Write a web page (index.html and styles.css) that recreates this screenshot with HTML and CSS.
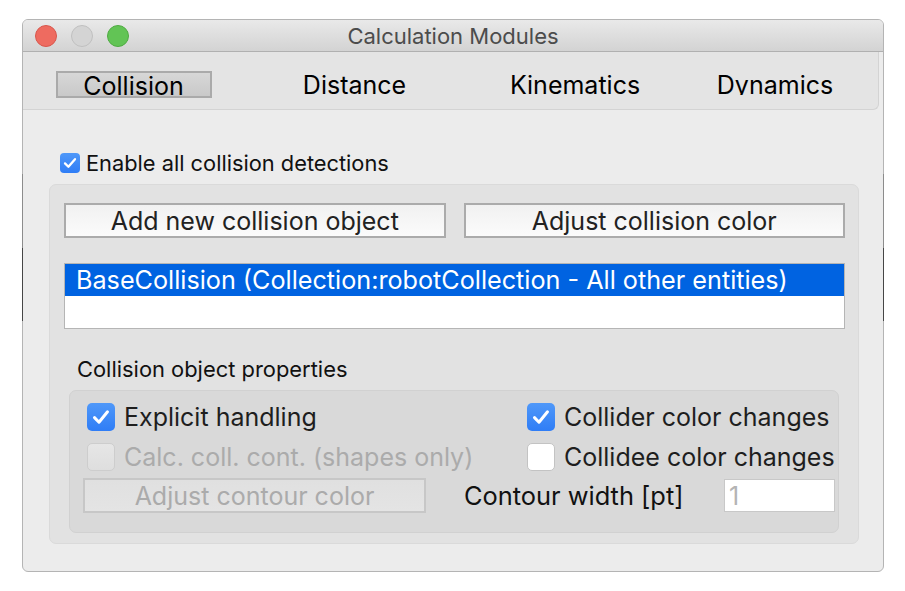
FILE: index.html
```html
<!DOCTYPE html>
<html>
<head>
<meta charset="utf-8">
<link rel="stylesheet" href="styles.css">
</head>
<body>
<div class="window">
  <div class="titlebar">
    <div class="lights">
      <span class="light red"></span>
      <span class="light grey"></span>
      <span class="light green"></span>
    </div>
    <div class="title">Calculation Modules</div>
    <div></div>
  </div>
  <div class="tabbar">
    <div class="tab"><div class="tab-box selected"><span class="tab-label">Collision</span></div></div>
    <div class="tab"><div class="tab-box"><span class="tab-label">Distance</span></div></div>
    <div class="tab"><div class="tab-box"><span class="tab-label">Kinematics</span></div></div>
    <div class="tab"><div class="tab-box"><span class="tab-label">Dynamics</span></div></div>
  </div>
  <div class="content">
    <div class="check-row">
      <span class="cb small checked"><svg viewBox="0 0 20 20" width="20" height="20"><path d="M5 10.4 L8.4 13.8 L15 6.2" fill="none" stroke="#fff" stroke-width="2.3" stroke-linecap="round" stroke-linejoin="round"/></svg></span>
      <span class="label-small">Enable all collision detections</span>
    </div>
    <div class="group outer">
      <div class="btn-row">
        <div class="btn">Add new collision object</div>
        <div class="btn">Adjust collision color</div>
      </div>
      <div class="list">
        <div class="list-item selected">BaseCollision (Collection:robotCollection - All other entities)</div>
      </div>
      <div class="group-label">Collision object properties</div>
      <div class="group inner">
        <div class="prop-row">
          <div class="prop left">
            <span class="cb big checked"><svg viewBox="0 0 28 28" width="28" height="28"><path d="M7.5 14.6 L12 19.2 L20.5 8.8" fill="none" stroke="#fff" stroke-width="3" stroke-linecap="round" stroke-linejoin="round"/></svg></span>
            <span class="label-big">Explicit handling</span>
          </div>
          <div class="prop">
            <span class="cb big checked"><svg viewBox="0 0 28 28" width="28" height="28"><path d="M7.5 14.6 L12 19.2 L20.5 8.8" fill="none" stroke="#fff" stroke-width="3" stroke-linecap="round" stroke-linejoin="round"/></svg></span>
            <span class="label-big">Collider color changes</span>
          </div>
        </div>
        <div class="prop-row second">
          <div class="prop left">
            <span class="cb big disabled"></span>
            <span class="label-big muted">Calc. coll. cont. (shapes only)</span>
          </div>
          <div class="prop">
            <span class="cb big unchecked"></span>
            <span class="label-big">Collidee color changes</span>
          </div>
        </div>
        <div class="contour-row">
          <div class="btn disabled-btn">Adjust contour color</div>
          <span class="label-big contour-label">Contour width [pt]</span>
          <div class="num-field">1</div>
        </div>
      </div>
    </div>
  </div>
</div>
</body>
</html>
```
FILE: styles.css
```css
body {
  margin: 0;
  background: #ffffff;
  font-family: Inter, "Liberation Sans", sans-serif;
}

.window {
  position: relative;
  margin: 19px 0 0 22px;
  width: 862px;
  height: 553px;
  box-sizing: border-box;
  border: 1px solid #b4b4b4;
  border-radius: 6px;
  background: #ececec;
  display: flex;
  flex-direction: column;
}

.window::before,
.window::after {
  content: "";
  position: absolute;
  top: 154px;
  width: 1px;
  height: 147px;
  background: linear-gradient(#8c8c8c 0 50%, #464646 50% 100%);
}
.window::before { left: -1px; }
.window::after { right: -1px; }

/* title bar */
.titlebar {
  height: 31px;
  border-bottom: 1px solid #b0b0b0;
  border-radius: 5px 5px 0 0;
  background: linear-gradient(#e9e9e9, #d3d3d3);
  display: grid;
  grid-template-columns: 1fr auto 1fr;
  align-items: center;
}
.lights {
  display: flex;
  gap: 14px;
  padding-left: 12px;
}
.light {
  width: 22px;
  height: 22px;
  border-radius: 50%;
  box-sizing: border-box;
}
.light.red { background: #ee6b60; border: 1px solid #d8564c; }
.light.grey { background: #d4d4d4; border: 1px solid #c0c0c0; }
.light.green { background: #62c455; border: 1px solid #4fab42; }
.title {
  font-size: 22px;
  color: #4c4c4c;
}

/* tabs */
.tabbar {
  margin-right: 4px;
  padding: 19px 0 11px 0;
  background: #e4e4e4;
  border-bottom: 1px solid #d3d3d3;
  border-right: 1px solid #d3d3d3;
  border-bottom-right-radius: 6px;
  display: grid;
  grid-template-columns: 221px 221px 220px 180px;
}
.tab {
  display: flex;
  justify-content: center;
}
.tab-box {
  height: 27px;
  display: flex;
  justify-content: center;
}
.tab-box.selected {
  width: 156px;
  box-sizing: border-box;
  border: 2px solid #aaaaaa;
  background: linear-gradient(#d7d7d7, #c9c9c9);
}
.tab-label {
  display: block;
  font-size: 25px;
  line-height: 28px;
  height: 24px;
  overflow: hidden;
  color: #000;
}
.tab-box.selected .tab-label {
  height: 23px;
  line-height: 26px;
  overflow: visible;
  padding-top: 0;
}

/* content */
.content {
  padding: 0 24px 0 26px;
  display: flex;
  flex-direction: column;
}
.check-row {
  margin: 43px 0 0 11px;
  height: 20px;
  display: flex;
  align-items: center;
  gap: 6px;
}
.label-small {
  font-size: 21.8px;
  color: #111;
}
.label-big {
  font-size: 25px;
  color: #1e1e1e;
  white-space: nowrap;
}
.label-big.muted { color: #ababab; }

.cb {
  display: block;
  box-sizing: border-box;
  flex: none;
}
.cb svg { display: block; }
.cb.small {
  width: 20px;
  height: 20px;
  border-radius: 4px;
}
.cb.big {
  width: 28px;
  height: 28px;
  border-radius: 5px;
}
.cb.checked { background: linear-gradient(#4f98f9, #2f7df6); }
.cb.unchecked { background: #ffffff; border: 1px solid #c3c3c3; }
.cb.disabled { background: linear-gradient(#e6e6e6, #dedede); border: 1px solid #cdcdcd; }

.group {
  box-sizing: border-box;
  border-radius: 7px;
}
.group.outer {
  margin-top: 11px;
  border: 1px solid #dadada;
  background: #e2e2e2;
  padding: 18px 13px 10px 14px;
}

.btn-row {
  display: flex;
  gap: 18px;
}
.btn {
  flex: 1;
  height: 35px;
  box-sizing: border-box;
  border: 2px solid #ababab;
  background: linear-gradient(#f1f1f1, #fbfbfb);
  font-size: 25px;
  color: #222;
  display: flex;
  align-items: center;
  justify-content: center;
  white-space: nowrap;
}

.list {
  margin-top: 25px;
  height: 66px;
  box-sizing: border-box;
  border: 1px solid #b5b5b5;
  background: #ffffff;
}
.list-item {
  height: 32px;
  padding-left: 11px;
  font-size: 25.2px;
  display: flex;
  align-items: center;
  white-space: nowrap;
}
.list-item.selected {
  background: #0063e1;
  color: #ffffff;
}

.group-label {
  margin: 27px 0 8px 13px;
  font-size: 21.9px;
  line-height: 26px;
  color: #111;
}

.group.inner {
  margin: 0 6px 0 5px;
  border: 1px solid #d1d1d1;
  background: #d9d9d9;
  padding: 11px 3px 19px 13px;
}
.prop-row {
  height: 28px;
  display: grid;
  grid-template-columns: 444px 1fr;
}
.prop-row.second { margin-top: 12px; }
.prop {
  display: flex;
  align-items: center;
  gap: 9px;
}
.prop.left { margin-left: 4px; }

.contour-row {
  margin-top: 8px;
  height: 35px;
  display: flex;
  align-items: center;
}
.btn.disabled-btn {
  flex: none;
  width: 343px;
  border-color: #c7c7c7;
  background: linear-gradient(#e0e0e0, #e4e4e4);
  color: #ababab;
}
.contour-label {
  margin-left: 38px;
  color: #111;
  font-size: 25.4px;
}
.num-field {
  margin-left: auto;
  width: 111px;
  height: 33px;
  box-sizing: border-box;
  border: 1px solid #c8c8c8;
  background: #ffffff;
  color: #b4b4b4;
  font-size: 25px;
  padding-left: 4px;
  display: flex;
  align-items: center;
}
```
